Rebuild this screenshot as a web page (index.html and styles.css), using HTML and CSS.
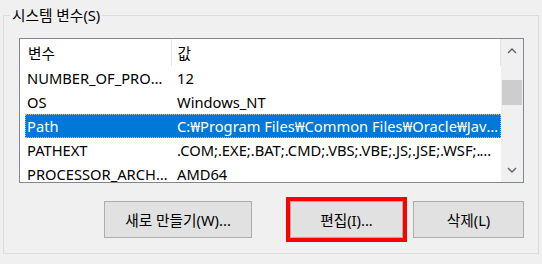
FILE: index.html
```html
<!DOCTYPE html>
<html lang="ko">

<head>
    <meta charset="UTF-8">
    <meta name="viewport" content="width=device-width, initial-scale=1.0">
    <title>시스템 변수</title>
    <link rel="stylesheet" href="styles.css">
</head>

<body>
    <fieldset class="group">
        <legend class="group-title">시스템 변수(S)</legend>

        <div class="listview">
            <div class="list-body">
                <table class="var-table">
                    <colgroup>
                        <col class="col-name">
                        <col class="col-value">
                    </colgroup>
                    <thead>
                        <tr>
                            <th>변수</th>
                            <th>값</th>
                        </tr>
                    </thead>
                    <tbody>
                        <tr>
                            <td>NUMBER_OF_PROCESSORS</td>
                            <td>12</td>
                        </tr>
                        <tr>
                            <td>OS</td>
                            <td>Windows_NT</td>
                        </tr>
                        <tr class="selected">
                            <td>Path</td>
                            <td>C:₩Program Files₩Common Files₩Oracle₩Java₩javapath;C:₩Windows₩system32</td>
                        </tr>
                        <tr>
                            <td>PATHEXT</td>
                            <td>.COM;.EXE;.BAT;.CMD;.VBS;.VBE;.JS;.JSE;.WSF;.WSH;.MSC</td>
                        </tr>
                        <tr>
                            <td>PROCESSOR_ARCHITECTURE</td>
                            <td>AMD64</td>
                        </tr>
                    </tbody>
                </table>
            </div>
            <div class="scrollbar">
                <div class="scroll-btn">
                    <svg width="10" height="6" viewBox="0 0 10 6">
                        <path d="M1 5 L5 1 L9 5" fill="none" stroke="#606060" stroke-width="1.4" />
                    </svg>
                </div>
                <div class="scroll-track">
                    <div class="scroll-thumb"></div>
                </div>
                <div class="scroll-btn">
                    <svg width="10" height="6" viewBox="0 0 10 6">
                        <path d="M1 1 L5 5 L9 1" fill="none" stroke="#606060" stroke-width="1.4" />
                    </svg>
                </div>
            </div>
        </div>

        <div class="button-row">
            <button class="btn btn-new">새로 만들기(W)...</button>
            <button class="btn btn-edit">편집(I)...</button>
            <button class="btn btn-delete">삭제(L)</button>
        </div>
    </fieldset>
</body>

</html>
```

FILE: styles.css
```css
body {
    margin: 0px;
    padding: 0px;
    background-color: #f0f0f0;
    font-family: "Noto Sans", "Noto Sans CJK KR", sans-serif;
    font-size: 14.7px;
    color: #000000;
}

.group {
    margin: 5px 3px 0px 3px;
    padding: 0px 14px 15px 15px;
    border: 1px solid #dcdcdc;
    min-width: 0;
}

.group-title {
    margin-left: -9px;
    padding: 0px 2px;
    line-height: 20px;
}

.listview {
    display: flex;
    height: 145px;
    margin-top: 13px;
    border: 1px solid #828790;
    background-color: #ffffff;
    box-sizing: border-box;
}

.list-body {
    flex: 1;
    overflow: hidden;
}

.var-table {
    margin-left: 5px;
    width: 476px;
    table-layout: fixed;
    border-collapse: collapse;
}

.col-name {
    width: 146px;
}

.var-table th,
.var-table td {
    padding: 0px 1px 0px 2px;
    white-space: nowrap;
    overflow: hidden;
    text-overflow: ellipsis;
    text-align: left;
    font-weight: normal;
}

.var-table th {
    height: 27px;
    padding-left: 3px;
    border-right: 1px solid #e5e5e5;
}

.var-table td {
    height: 24px;
}

.var-table td:nth-child(2),
.var-table th:nth-child(2) {
    padding-left: 6px;
}

.selected td {
    background-color: #0078d7;
    color: #ffffff;
}

.selected {
    outline: 1px dotted #f2b070;
    outline-offset: -1px;
}

.scrollbar {
    width: 22px;
    display: flex;
    flex-direction: column;
    background-color: #f0f0f0;
}

.scroll-btn {
    height: 24px;
    display: flex;
    justify-content: center;
    align-items: center;
}

.scroll-track {
    flex: 1;
    padding-top: 17px;
}

.scroll-thumb {
    height: 25px;
    margin: 0px 1px 0px 1px;
    background-color: #cdcdcd;
}

.button-row {
    display: flex;
    justify-content: flex-end;
    gap: 10px;
    margin-top: 18px;
}

.btn {
    height: 37px;
    padding: 0px;
    box-sizing: border-box;
    border: 1px solid #adadad;
    background-color: #e1e1e1;
    font-family: "Noto Sans", "Noto Sans CJK KR", sans-serif;
    font-size: 14.7px;
    color: #000000;
}

.btn-new {
    width: 148px;
    margin-right: 28px;
}

.btn-edit {
    width: 113px;
    outline: 4px solid #ff0000;
    outline-offset: 0px;
}

.btn-delete {
    width: 111px;
}
```
